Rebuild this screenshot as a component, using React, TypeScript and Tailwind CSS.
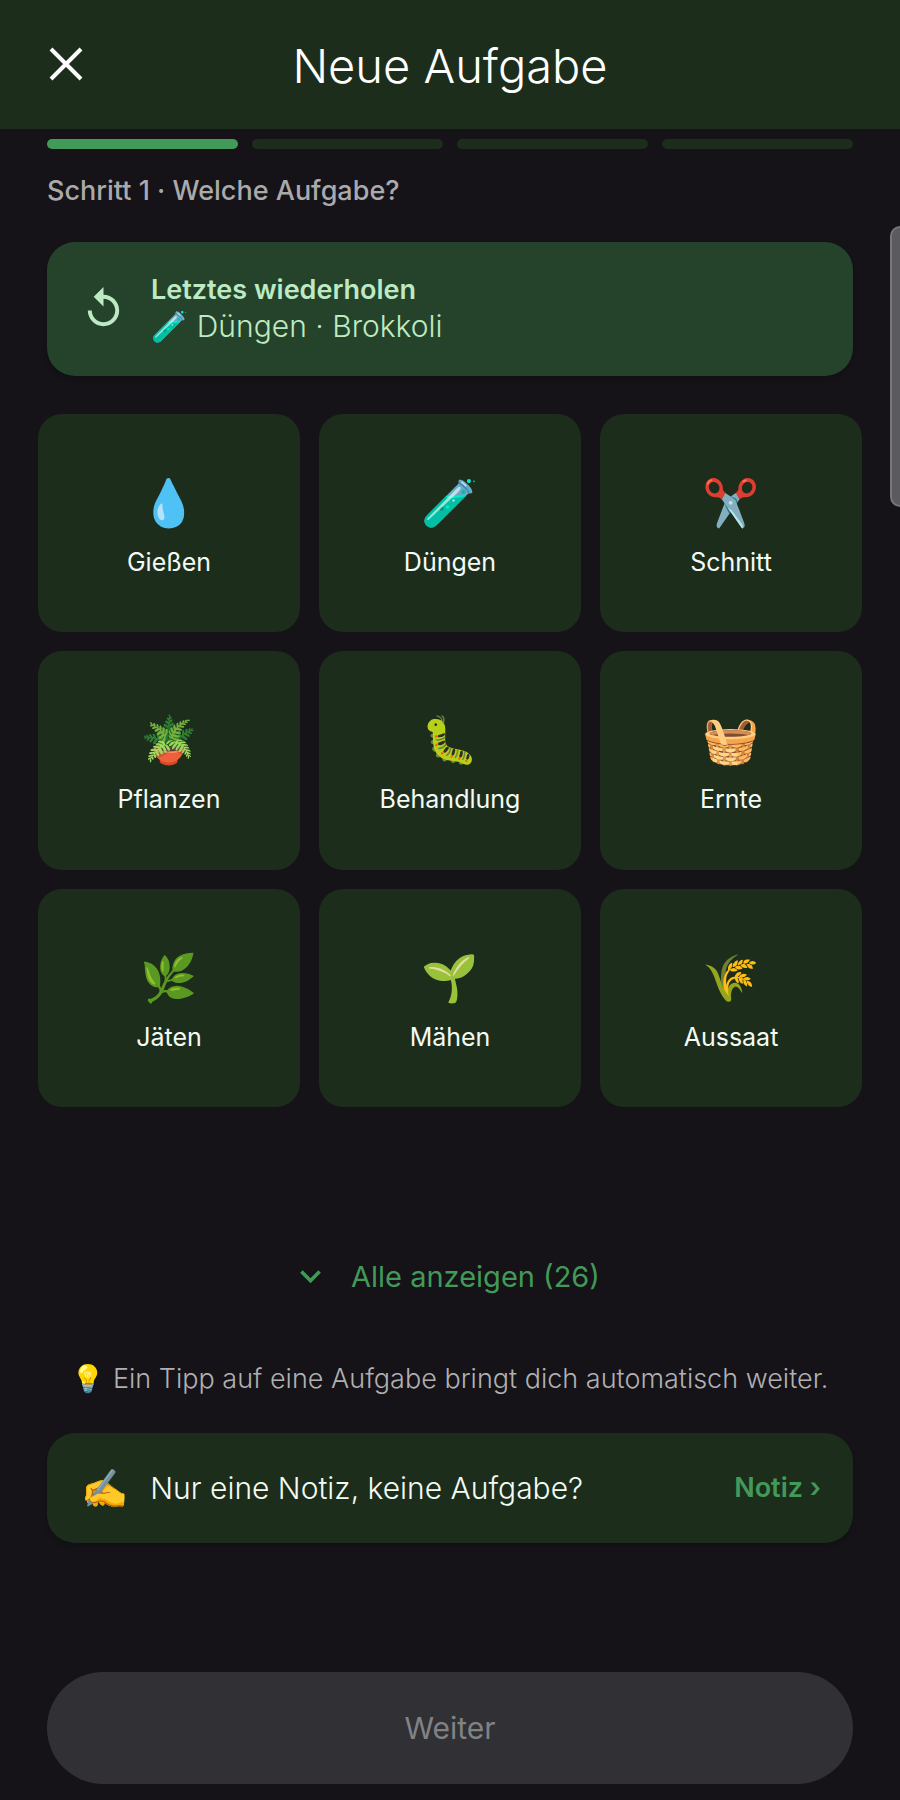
import React from 'react';

const tasks = [
  { icon: '💧', label: 'Gießen' },
  { icon: '🧪', label: 'Düngen' },
  { icon: '✂️', label: 'Schnitt' },
  { icon: '🪴', label: 'Pflanzen' },
  { icon: '🐛', label: 'Behandlung' },
  { icon: '🧺', label: 'Ernte' },
  { icon: '🌿', label: 'Jäten' },
  { icon: '🌱', label: 'Mähen' },
  { icon: '🌾', label: 'Aussaat' },
];

function Progress() {
  return (
    <div className="grid grid-cols-4 gap-[14px]">
      <div className="h-[10px] rounded-full bg-[#429a58]" />
      <div className="h-[10px] rounded-full bg-[#1c2d1c]" />
      <div className="h-[10px] rounded-full bg-[#1c2d1c]" />
      <div className="h-[10px] rounded-full bg-[#1c2d1c]" />
    </div>
  );
}

export default function App() {
  return (
    <div className="relative flex min-h-screen flex-col bg-[#151218] font-['Inter','Noto_Color_Emoji',sans-serif] text-[#f4faf4]">
      <header className="grid grid-cols-[56px_1fr_56px] items-start bg-[#1c2d1c] px-[38px] pt-8 pb-[29px]">
        <button type="button" aria-label="Schließen" className="flex h-16 items-center justify-center text-white">
          <svg viewBox="0 0 36 36" className="size-9" fill="none" stroke="currentColor" strokeWidth="4">
            <path d="M3 3 33 33M33 3 3 33" />
          </svg>
        </button>
        <h1 className="text-center text-[47px] leading-[68px] font-light text-white">Neue Aufgabe</h1>
      </header>

      <main className="flex flex-col px-[47px] pt-[10px]">
        <Progress />
        <p className="mt-6 text-[27px] leading-9 font-medium text-[#aaaaab]">Schritt 1 · Welche Aufgabe?</p>

        <button
          type="button"
          className="mt-[33px] flex items-center gap-6 rounded-[28px] bg-[#25432a] px-[33px] pt-[30px] pb-8 text-left text-[#bdeac3] shadow-md"
        >
          <svg viewBox="0 0 24 24" className="size-[47px] shrink-0" fill="currentColor">
            <path d="M12 5V1L7 6l5 5V7c3.31 0 6 2.69 6 6s-2.69 6-6 6-6-2.69-6-6H4c0 4.42 3.58 8 8 8s8-3.58 8-8-3.58-8-8-8z" />
          </svg>
          <span className="flex flex-col">
            <span className="text-[27px] leading-9 font-semibold">Letztes wiederholen</span>
            <span className="text-[30px] leading-9 font-light">🧪 Düngen · Brokkoli</span>
          </span>
        </button>

        <div className="-mx-[9px] mt-[38px] grid grid-cols-3 gap-[19px]">
          {tasks.map(({ icon, label }) => (
            <button
              key={label}
              type="button"
              className="flex aspect-[6/5] flex-col items-center justify-center gap-[14px] rounded-[24px] bg-[#1c2d1c] pt-1"
            >
              <span className="text-[46px] leading-[60px]">{icon}</span>
              <span className="text-[25px] leading-8">{label}</span>
            </button>
          ))}
        </div>

        <button
          type="button"
          className="mt-[142px] flex items-center justify-center gap-[30px] text-[29px] leading-[56px] text-[#429a58]"
        >
          <svg viewBox="0 0 21 14" className="h-[14px] w-[21px]" fill="none" stroke="currentColor" strokeWidth="3.6">
            <path d="M1.4 1.6 10.5 10.7 19.6 1.6" />
          </svg>
          <span>Alle anzeigen (26)</span>
        </button>
        <p className="mt-14 text-center text-[27px] leading-9 font-light whitespace-nowrap text-[#b0b0b1]">
          💡 Ein Tipp auf eine Aufgabe bringt dich automatisch weiter.
        </p>
        <button
          type="button"
          className="mt-9 flex items-center gap-[22px] rounded-[28px] bg-[#1c2d1c] py-[35px] pr-8 pl-[34px] text-left shadow-md"
        >
          <span className="text-[38px] leading-10">✍️</span>
          <span className="flex-1 text-[30px] leading-10 font-light">Nur eine Notiz, keine Aufgabe?</span>
          <span className="text-[27px] leading-10 font-semibold text-[#429a58]">Notiz ›</span>
        </button>
      </main>

      <footer className="mt-auto px-[47px] pb-4">
        <button type="button" className="w-full rounded-full bg-[#303035] py-9 text-[30px] leading-10 text-[#828285]">
          Weiter
        </button>
      </footer>

      <div className="absolute top-[226px] right-0 h-[281px] w-[10px] rounded-l-[10px] border-2 border-r-0 border-[#77767a] bg-[#5b5a5e]" />
    </div>
  );
}
